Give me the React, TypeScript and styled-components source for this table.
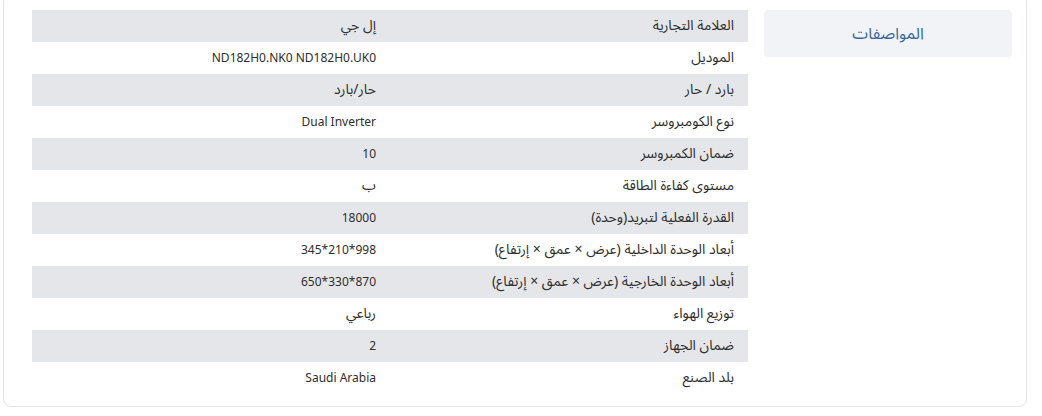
import React from "react";
import styled, { createGlobalStyle } from "styled-components";

const specs = [
  { label: "العلامة التجارية", value: "إل جي" },
  { label: "الموديل", value: "ND182H0.NK0 ND182H0.UK0" },
  { label: "بارد / حار", value: "حار/بارد" },
  { label: "نوع الكومبروسر", value: "Dual Inverter" },
  { label: "ضمان الكمبروسر", value: "10" },
  { label: "مستوى كفاءة الطاقة", value: "ب" },
  { label: "القدرة الفعلية لتبريد(وحدة)", value: "18000" },
  { label: "أبعاد الوحدة الداخلية (عرض × عمق × إرتفاع)", value: "998*210*345" },
  { label: "أبعاد الوحدة الخارجية (عرض × عمق × إرتفاع)", value: "870*330*650" },
  { label: "توزيع الهواء", value: "رباعي" },
  { label: "ضمان الجهاز", value: "2" },
  { label: "بلد الصنع", value: "Saudi Arabia" },
];

const isArabic = (s: string) => /[\u0600-\u06FF]/.test(s);

const GlobalStyle = createGlobalStyle`
  body {
    margin: 0;
    background: #fff;
    font-family: "Noto Sans", "Noto Sans Arabic", "DejaVu Sans", sans-serif;
    color: #333;
  }
`;

const Page = styled.div`
  direction: rtl;
  padding: 0 15px 0 3px;
  overflow: hidden;
  height: 416px;
`;

const Card = styled.section`
  margin-top: -6px;
  display: flex;
  gap: 16px;
  padding: 15px 14px 12px 28px;
  border: 1px solid #e2e4e8;
  border-radius: 8px;
  background: #fff;
`;

const Tabs = styled.div`
  width: 248px;
  flex-shrink: 0;
`;

const Tab = styled.div`
  height: 47px;
  display: flex;
  align-items: center;
  justify-content: center;
  background: #f1f3f6;
  border-radius: 4px;
  color: #3a679b;
  font-size: 16px;
`;

const Table = styled.table`
  width: 716px;
  flex-shrink: 0;
  table-layout: fixed;
  border-collapse: collapse;
`;

const Row = styled.tr<{ $shade: boolean }>`
  height: 32px;
  background: ${(p) => (p.$shade ? "#e5e6ea" : "#fff")};
`;

// arabic text renders narrower than the latin font here, so it gets a bigger size
const Cell = styled.td<{ $ar?: boolean }>`
  width: 50%;
  padding: 0 14px 2px 12px;
  text-align: right;
  vertical-align: middle;
  font-size: ${(p) => (p.$ar ? "14px" : "12px")};
  color: #2e2e2e;
  white-space: nowrap;
`;

export default function App() {
  return (
    <>
      <GlobalStyle />
      <Page>
        <Card>
          <Tabs>
            <Tab>المواصفات</Tab>
          </Tabs>
          <Table>
            <tbody>
              {specs.map((s, i) => (
                <Row key={s.label} $shade={i % 2 === 0}>
                  <Cell $ar>{s.label}</Cell>
                  <Cell $ar={isArabic(s.value)}>{s.value}</Cell>
                </Row>
              ))}
            </tbody>
          </Table>
        </Card>
      </Page>
    </>
  );
}
